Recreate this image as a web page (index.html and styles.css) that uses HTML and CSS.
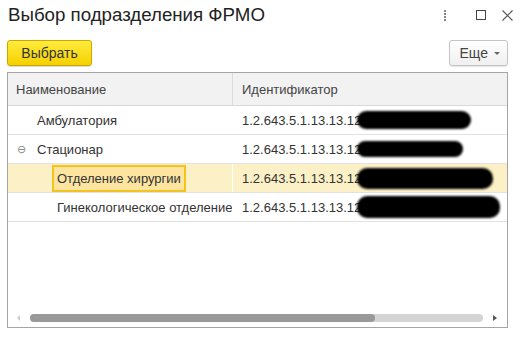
FILE: index.html
```html
<!DOCTYPE html>
<html lang="ru">
<head>
    <meta charset="UTF-8">
    <title>Выбор подразделения ФРМО</title>
    <link rel="stylesheet" href="styles.css">
</head>
<body>
    <div class="window">
        <div class="titlebar">
            <h1>Выбор подразделения ФРМО</h1>
            <div class="win-buttons">
                <span class="dots"><i></i><i></i><i></i><i></i></span>
                <span class="maximize"></span>
                <svg class="close" width="11" height="11" viewBox="0 0 11 11">
                    <path d="M0.5 0.5 L10.5 10.5 M10.5 0.5 L0.5 10.5" stroke="#555" stroke-width="1.1" fill="none"/>
                </svg>
            </div>
        </div>

        <div class="toolbar">
            <button class="btn btn-primary">Выбрать</button>
            <button class="btn btn-more">Еще <span class="caret"></span></button>
        </div>

        <div class="grid">
            <div class="grid-head">
                <div class="cell">Наименование</div>
                <div class="cell">Идентификатор</div>
            </div>
            <div class="grid-body">
                <div class="row">
                    <div class="cell level-1">Амбулатория</div>
                    <div class="cell">1.2.643.5.1.13.13.12<span class="redact w1"></span></div>
                </div>
                <div class="row">
                    <div class="cell level-1"><span class="toggle">⊖</span>Стационар</div>
                    <div class="cell">1.2.643.5.1.13.13.12<span class="redact w2"></span></div>
                </div>
                <div class="row selected">
                    <div class="cell level-2"><span class="current">Отделение хирургии</span></div>
                    <div class="cell">1.2.643.5.1.13.13.12<span class="redact w3"></span></div>
                </div>
                <div class="row">
                    <div class="cell level-2">Гинекологическое отделение</div>
                    <div class="cell">1.2.643.5.1.13.13.12<span class="redact w4"></span></div>
                </div>
            </div>
            <div class="hscroll">
                <span class="arrow left"></span>
                <div class="track"><div class="thumb"></div></div>
                <span class="arrow right"></span>
            </div>
        </div>
    </div>
</body>
</html>
```

FILE: styles.css
```css
:root {
    --text-color: #333;
    --border-color: #a5a5a5;
    --line-color: #e2e2e2;
    --row-selected: #fcf0c6;
    --cell-current: #fde5a0;
    --cell-current-border: #f5c320;
}

html, body {
    margin: 0;
    background: #fff;
    font-family: 'Liberation Sans', Arial, sans-serif;
    color: var(--text-color);
}

.window {
    padding: 0 17px 0 7px;
}

.titlebar {
    height: 34px;
    display: flex;
    align-items: center;
    justify-content: space-between;
}

h1 {
    margin: 0 0 0 1px;
    font-size: 18.7px;
    font-weight: normal;
    color: #222;
    position: relative;
    top: -2px;
}

.win-buttons {
    display: flex;
    align-items: center;
    margin-right: -5px;
    position: relative;
    top: -2px;
}

.dots {
    display: flex;
    flex-direction: column;
    gap: 1px;
    width: 3px;
    margin-right: 29px;
}

.dots i {
    display: block;
    width: 2px;
    height: 2px;
    background: #888;
}

.maximize {
    width: 8px;
    height: 8px;
    border: 1px solid #444;
    margin-right: 16px;
}

.close {
    display: block;
}

.toolbar {
    display: flex;
    justify-content: space-between;
    margin-top: 6px;
}

.btn {
    height: 26px;
    font-family: inherit;
    font-size: 14px;
    border-radius: 3px;
    padding: 0;
    cursor: pointer;
}

.btn-primary {
    width: 85px;
    color: #333;
    background: linear-gradient(#ffec3d, #f5d000);
    border: 1px solid #c9a800;
    box-shadow: 0 1px 1px rgba(0, 0, 0, 0.15);
}

.btn-more {
    width: 59px;
    color: #444;
    background: linear-gradient(#fff, #f0f0f0);
    border: 1px solid #c4c4c4;
    box-shadow: 0 1px 1px rgba(0, 0, 0, 0.1);
    display: flex;
    align-items: center;
    justify-content: flex-end;
    padding-right: 7px;
    gap: 6px;
}

.caret {
    width: 0;
    height: 0;
    border-left: 3px solid transparent;
    border-right: 3px solid transparent;
    border-top: 3px solid #666;
}

.grid {
    margin-top: 6px;
    height: 254px;
    border: 1px solid var(--border-color);
    display: flex;
    flex-direction: column;
    font-size: 13px;
}

.grid-head, .row {
    display: grid;
    grid-template-columns: 225px 1fr;
}

.grid-head {
    height: 32px;
    background: #f2f2f2;
    border-bottom: 1px solid #d8d8d8;
    color: #444;
}

.grid-head .cell:first-child {
    border-right: 1px solid #dcdcdc;
    padding-left: 8px;
}

.cell {
    display: flex;
    align-items: center;
    padding-left: 9px;
    white-space: nowrap;
    overflow: hidden;
}

.grid-body {
    flex: 1;
}

.row {
    height: 28px;
    border-bottom: 1px solid var(--line-color);
}

.row .cell:first-child {
    border-right: 1px solid #fff;
}

.level-1 {
    padding-left: 29px;
}

.level-2 {
    padding-left: 49px;
}

.toggle {
    width: 20px;
    margin-left: -20px;
    color: #888;
    font-size: 11px;
}

.selected {
    background: var(--row-selected);
}

.current {
    margin-left: -5px;
    padding: 4px 3px 4px 3px;
    background: var(--cell-current);
    border: 2px solid var(--cell-current-border);
}

.redact {
    display: inline-block;
    height: 18px;
    margin-left: -4px;
    background: #000;
    border-radius: 10px;
    filter: blur(1.2px);
}

.w1 { width: 114px; }
.w2 { width: 106px; height: 16px; }
.w3 { width: 136px; height: 21px; }
.w4 { width: 143px; height: 22px; }

.hscroll {
    height: 12px;
    margin-bottom: 3px;
    display: flex;
    align-items: center;
    padding: 0 10px 0 9px;
}

.arrow {
    width: 0;
    height: 0;
    border-top: 3px solid transparent;
    border-bottom: 3px solid transparent;
}

.arrow.left {
    border-right: 3px solid #ccc;
    margin-right: 10px;
}

.arrow.right {
    border-left: 4px solid #555;
    margin-left: 10px;
}

.track {
    flex: 1;
    height: 8px;
    background: #d4d4d4;
    border-radius: 4px;
}

.thumb {
    width: 345px;
    height: 100%;
    background: #999;
    border-radius: 4px;
}
```
